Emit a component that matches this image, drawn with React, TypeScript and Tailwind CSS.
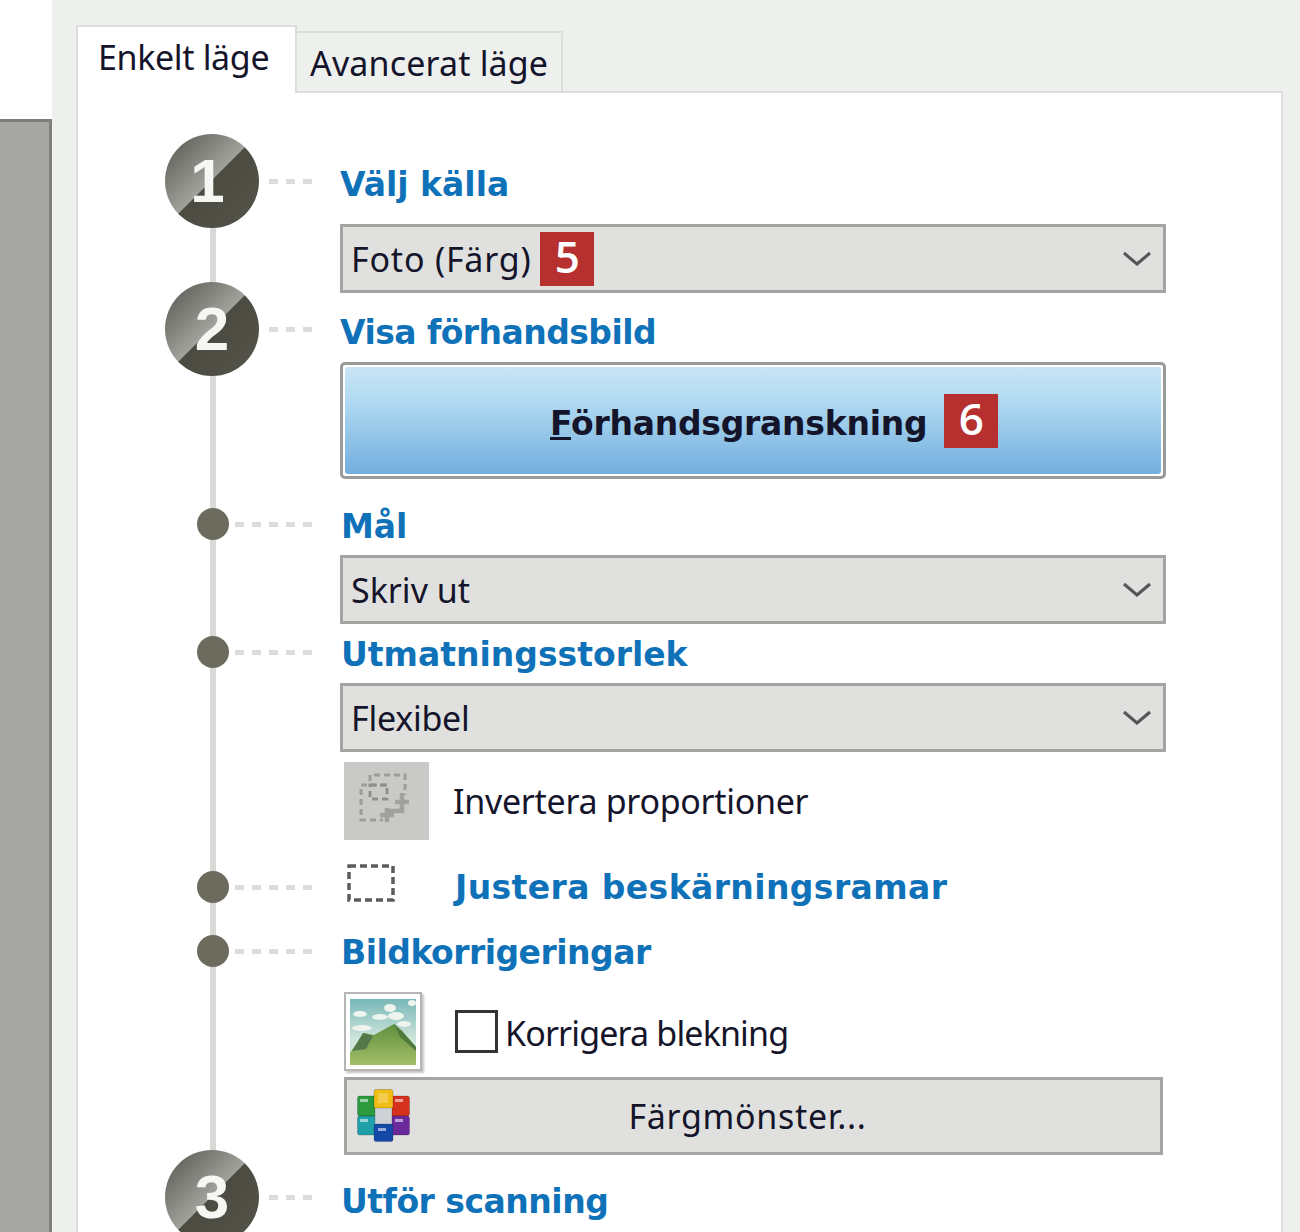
import React from 'react';

const headingClass =
  "font-['DejaVu_Sans'] font-bold text-[33px] leading-none text-[#0f72b8] whitespace-nowrap";
const bodyClass = "font-['Noto_Sans'] text-[34px] leading-none text-[#14142a] whitespace-nowrap";

const Dashes = ({ count }: { count: number }) => (
  <div className="ml-auto mr-[28px] flex gap-[8px]">
    {Array.from({ length: count }).map((_, i) => (
      <span key={i} className="h-[5px] w-[9px] bg-[#dcdcda]" />
    ))}
  </div>
);

const Step = ({ n }: { n: number }) => (
  <div className="flex h-[94px] w-[94px] shrink-0 items-center justify-center rounded-full bg-[linear-gradient(135deg,#63635d_10%,#a2a29c_49%,#4c4b41_50%,#55544a_100%)]">
    <span
      className={`font-['Liberation_Sans'] text-[62px] font-bold leading-none text-[#f6f6f2] ${n === 1 ? 'pr-[9px]' : ''}`}
    >
      {n}
    </span>
  </div>
);

const Dot = () => (
  <div className="ml-[32px] h-[32px] w-[32px] shrink-0 rounded-full bg-[#6c6b5d]" />
);

const Heading = ({
  text,
  step,
  dashes,
  className,
  textClass,
}: {
  text: string;
  step?: number;
  dashes?: number;
  className?: string;
  textClass?: string;
}) => (
  <div className={`relative flex h-[50px] items-center ${className ?? ''}`}>
    <div className="flex h-[50px] w-[175px] shrink-0 items-center">
      {step ? <Step n={step} /> : <Dot />}
      <Dashes count={dashes ?? 5} />
    </div>
    <span className={`${headingClass} ${textClass ?? ''}`}>{text}</span>
  </div>
);

const Chevron = () => (
  <svg width="28" height="16" viewBox="0 0 28 16" className="shrink-0" fill="none">
    <path d="M1 2 L14 13 L27 2" stroke="#555" strokeWidth="3" />
  </svg>
);

const Combo = ({
  text,
  badge,
  className,
  textClass,
}: {
  text: string;
  badge?: string;
  className?: string;
  textClass?: string;
}) => (
  <div
    className={`relative ml-[175px] flex h-[69px] w-[826px] items-center border-[3px] border-[#a3a5a3] bg-[#e0e1df] pl-[8px] pr-[12px] ${className ?? ''}`}
  >
    <span className={`${bodyClass} ${textClass ?? ''}`}>{text}</span>
    {badge && <Badge text={badge} className="ml-[9px]" />}
    <div className="ml-auto flex">
      <Chevron />
    </div>
  </div>
);

const Badge = ({ text, className }: { text: string; className?: string }) => (
  <span
    className={`flex h-[54px] w-[54px] shrink-0 items-center justify-center bg-[#b5302f] pb-[5px] font-['Open_Sans'] text-[44px] font-semibold leading-none text-white ${className ?? ''}`}
  >
    {text}
  </span>
);

const InvertIcon = () => (
  <svg width="56" height="56" viewBox="0 0 56 56" fill="none">
    <g stroke="#9c9e9c" strokeWidth="3" strokeDasharray="6 4">
      <path d="M11 8 V2 H46 V22" />
      <path d="M28 12 H2 V47 H24" />
      <rect x="11" y="12" width="17" height="14" stroke="#8d8f8d" />
    </g>
    <path
      d="M43 20 V38 H28 M36 29 H50 M28 35 V49 M21 42 H35"
      stroke="#a0a2a0"
      strokeWidth="4.5"
    />
  </svg>
);

const CropIcon = () => (
  <svg width="48" height="38" viewBox="0 0 48 38" fill="none">
    <rect x="2" y="2" width="44" height="34" stroke="#5c5c5c" strokeWidth="3.5" strokeDasharray="7 4" />
  </svg>
);

const PictureIcon = () => (
  <svg width="66" height="66" viewBox="0 0 66 66">
    <defs>
      <linearGradient id="sky" x1="0" y1="0" x2="0" y2="1">
        <stop offset="0" stopColor="#78b8b8" />
        <stop offset="0.6" stopColor="#cfe4da" />
      </linearGradient>
      <linearGradient id="hill" x1="0" y1="0" x2="0" y2="1">
        <stop offset="0" stopColor="#5f8f3f" />
        <stop offset="1" stopColor="#a3bf68" />
      </linearGradient>
    </defs>
    <rect width="66" height="66" fill="url(#sky)" />
    <g fill="#eef4ee">
      <ellipse cx="40" cy="9" rx="6" ry="4" />
      <ellipse cx="62" cy="4" rx="4" ry="3" />
      <ellipse cx="10" cy="15" rx="7" ry="3" />
      <ellipse cx="30" cy="18" rx="8" ry="3" />
      <ellipse cx="46" cy="17" rx="8" ry="4" />
      <ellipse cx="12" cy="29" rx="10" ry="3" />
      <ellipse cx="54" cy="25" rx="7" ry="3" />
    </g>
    <path d="M0 66 V54 L14 34 L24 36 L44 25 L52 32 L66 48 V66 Z" fill="url(#hill)" />
    <path d="M2 52 L13 34 L23 37 L16 50 Z" fill="#55794a" />
    <path d="M44 25 L52 32 L66 48 V52 L50 38 Z" fill="#4f7a3c" />
  </svg>
);

const PaletteIcon = () => (
  <svg width="53" height="53" viewBox="0 0 53 53" stroke="#00000030" strokeWidth="1">
    <rect x="0.5" y="7" width="19" height="20" rx="2" fill="#2c9a3e" />
    <rect x="33.5" y="7" width="19" height="20" rx="2" fill="#d6301f" />
    <rect x="0.5" y="27" width="19" height="19" rx="2" fill="#1f9fa8" />
    <rect x="33.5" y="27" width="19" height="19" rx="2" fill="#6a2a9c" />
    <rect x="17" y="0.5" width="19" height="19" rx="2" fill="#f0bd12" />
    <rect x="18" y="19" width="17" height="17" fill="#ced2d6" />
    <rect x="17" y="35" width="19" height="17.5" rx="2" fill="#1449a8" />
    <g fill="#ffffff" fillOpacity="0.55" stroke="none">
      <rect x="3" y="10" width="8" height="3" />
      <rect x="38" y="10" width="8" height="3" />
      <rect x="3" y="30" width="8" height="3" />
      <rect x="38" y="30" width="8" height="3" />
      <rect x="21" y="39" width="8" height="3" />
      <rect x="21" y="4" width="10" height="10" fillOpacity="0.25" />
    </g>
  </svg>
);

export default function App() {
  return (
    <div className="flex h-[1232px] w-[1300px] overflow-hidden bg-white">
      <div className="flex w-[52px] shrink-0 flex-col">
        <div className="h-[119px] bg-white" />
        <div className="flex-1 border-r-[3px] border-t-[3px] border-[#7e7f7d] bg-[#a6a7a5]" />
      </div>

      <div className="flex flex-1 flex-col bg-[#eef0ee] pl-[24px] pr-[17px] pt-[25px]">
        <div className="relative z-10 flex h-[68px] items-end">
          <div className="flex h-[68px] w-[221px] items-start border-x-[2px] border-t-[2px] border-[#dcdedc] bg-white pl-[20px] pt-[13px]">
            <span className={`${bodyClass} tracking-[-0.35px]`}>Enkelt läge</span>
          </div>
          <div className="flex h-[62px] w-[266px] items-start border-r-[2px] border-t-[2px] border-[#dcdedc] pl-[13px] pt-[13px]">
            <span className={`${bodyClass} tracking-[0.15px]`}>Avancerat läge</span>
          </div>
        </div>

        <div className="relative -mb-[12px] -mt-[2px] flex-1 border-[2px] border-[#dcdedc] bg-white pl-[87px] pt-[63px]">
          <div className="absolute bottom-0 left-[132px] top-[90px] w-[6px] bg-[#d9d9d7]" />

          <Heading text="Välj källa" step={1} dashes={3} textClass="mt-[7px]" />
          <Combo text="Foto (Färg)" badge="5" className="mt-[18px]" textClass="tracking-[0.8px]" />

          <Heading
            text="Visa förhandsbild"
            step={2}
            dashes={3}
            className="mt-[11px]"
            textClass="mt-[6px] tracking-[-0.55px]"
          />
          <div className="ml-[175px] mt-[8px] h-[117px] w-[826px] rounded-[5px] border-[3px] border-[#999b99] bg-white p-[2px]">
            <div className="flex h-full items-center rounded-[3px] bg-[linear-gradient(180deg,#c9e5f5_0%,#aed8f1_35%,#72aede_100%)] pl-[205px]">
              <span className="mt-[6px] font-['DejaVu_Sans'] text-[33px] font-bold leading-none tracking-[-0.25px] text-[#14142a]">
                <span className="underline">F</span>örhandsgranskning
              </span>
              <Badge text="6" className="ml-[17px]" />
            </div>
          </div>

          <Heading text="Mål" className="mt-[20px]" textClass="mt-[5px] pl-[1px]" />
          <Combo text="Skriv ut" className="mt-[6px]" />

          <Heading text="Utmatningsstorlek" className="mt-[3px]" textClass="mt-[4px] pl-[1px]" />
          <Combo text="Flexibel" className="mt-[6px]" textClass="tracking-[-0.25px]" />

          <div className="ml-[179px] mt-[10px] flex h-[78px] items-center">
            <div className="flex h-[78px] w-[85px] shrink-0 items-center justify-center bg-[#c9cac8]">
              <InvertIcon />
            </div>
            <span className={`${bodyClass} ml-[24px] tracking-[-0.3px]`}>Invertera proportioner</span>
          </div>

          <div className="relative mt-[22px] flex h-[50px] items-center">
            <div className="flex h-[50px] w-[175px] shrink-0 items-center">
              <Dot />
              <Dashes count={5} />
            </div>
            <div className="mb-[8px] ml-[7px] flex w-[108px] shrink-0">
              <CropIcon />
            </div>
            <span className={`${headingClass} tracking-[0.4px]`}>Justera beskärningsramar</span>
          </div>

          <Heading
            text="Bildkorrigeringar"
            className="mt-[14px]"
            textClass="mt-[2px] pl-[1px] tracking-[-0.5px]"
          />

          <div className="ml-[179px] mt-[16px] flex h-[79px] items-center">
            <div className="flex h-[79px] w-[78px] shrink-0 items-center justify-center border-[2px] border-[#b5b6b4] bg-white shadow-[2px_2px_2px_#c4c5c3]">
              <PictureIcon />
            </div>
            <div className="ml-[33px] h-[43px] w-[43px] shrink-0 border-[3px] border-[#333333] bg-white" />
            <span className={`${bodyClass} ml-[7px] mt-[2px] tracking-[-0.85px]`}>Korrigera blekning</span>
          </div>

          <div className="relative ml-[179px] mt-[6px] flex h-[78px] w-[819px] items-center justify-center border-[3px] border-[#a3a5a3] bg-[#e0e1df]">
            <div className="absolute left-[10px] top-[9px]">
              <PaletteIcon />
            </div>
            <span className={`${bodyClass} mr-[12px] tracking-[0.7px]`}>Färgmönster...</span>
          </div>

          <Heading
            text="Utför scanning"
            step={3}
            dashes={3}
            className="mt-[17px]"
            textClass="mt-[8px] pl-[1px] tracking-[-0.5px]"
          />
        </div>
      </div>
    </div>
  );
}
